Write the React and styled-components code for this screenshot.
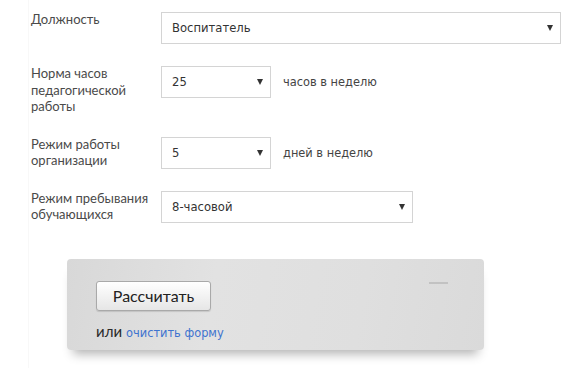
import React from "react";
import styled, {createGlobalStyle} from "styled-components";

const GlobalStyle = createGlobalStyle`
  html, body {
    margin: 0;
    padding: 0;
    background: #fff;
  }
`

const Page = styled.div`
  width: 569px;
  height: 368px;
  box-sizing: border-box;
  padding: 0 0 0 28px;
  overflow: hidden;
`

const Sheet = styled.div`
  height: 100%;
  border-left: 1px solid #f8f8f8;
  padding: 12px 0 0 2px;
  box-sizing: border-box;
`

const Form = styled.div`
  display: flex;
  flex-direction: column;
  gap: 22px;
`

const Row = styled.div`
  display: flex;
  align-items: flex-start;
`

const Label = styled.div`
  width: 130px;
  margin-top: -1px;
  font-family: Lato, "Open Sans", sans-serif;
  font-size: 13px;
  line-height: 16.5px;
  color: #4a4a4a;
`

const Field = styled.div`
  display: flex;
  align-items: center;
  height: 32px;
`

const SelectBox = styled.div`
  width: ${p => p.$width}px;
  height: 32px;
  box-sizing: border-box;
  border: 1px solid #d4d4d4;
  background: #fff;
  display: flex;
  align-items: center;
  justify-content: space-between;
  padding: 0 7px 0 10px;
  font-family: "DejaVu Sans", Verdana, sans-serif;
  font-size: 11.6px;
  color: #333;
`

const Arrow = styled.span`
  width: 0;
  height: 0;
  border-left: 3.5px solid transparent;
  border-right: 3.5px solid transparent;
  border-top: 6px solid #333;
`

const Suffix = styled.span`
  margin-left: 12px;
  font-family: "DejaVu Sans", Verdana, sans-serif;
  font-size: 11.4px;
  color: #444;
`

const Panel = styled.div`
  position: relative;
  margin: 36px 0 0 36px;
  width: 417px;
  height: 91px;
  box-sizing: border-box;
  padding: 22px 0 0 29px;
  border-radius: 4px;
  background: linear-gradient(100deg, #d8d8d8 0%, #e2e2e2 35%, #dfdfdf 70%, #dadada 100%);
  box-shadow: 0 10px 10px -6px rgba(0, 0, 0, 0.3);
`

const Dash = styled.span`
  position: absolute;
  top: 23px;
  right: 36px;
  width: 19px;
  height: 2px;
  background: #c2c2c2;
`

const Button = styled.button`
  display: block;
  width: 115px;
  height: 30px;
  padding: 0;
  border: 1px solid #a9a9a9;
  border-radius: 3px;
  background: linear-gradient(#ffffff, #e6e6e6);
  box-shadow: 0 1px 1px rgba(0, 0, 0, 0.12);
  font-family: Lato, "Open Sans", sans-serif;
  font-size: 16px;
  color: #222;
`

const Hint = styled.div`
  margin-top: 11px;
  font-family: Lato, "Open Sans", sans-serif;
  font-size: 15px;
  color: #2a2a2a;
`

const Link = styled.a`
  margin-left: 4px;
  font-family: "DejaVu Sans", Verdana, sans-serif;
  font-size: 11.4px;
  color: #3f74cf;
  text-decoration: none;
`

const rows = [
    {label: 'Должность', value: 'Воспитатель', width: 400},
    {label: 'Норма часов педагогической работы', value: '25', width: 110, suffix: 'часов в неделю'},
    {label: 'Режим работы организации', value: '5', width: 110, suffix: 'дней в неделю'},
    {label: 'Режим пребывания обучающихся', value: '8-часовой', width: 252},
]

export default function App() {
    return (
        <>
            <GlobalStyle/>
            <Page>
                <Sheet>
                    <Form>
                        {rows.map((row) => (
                            <Row key={row.label}>
                                <Label>{row.label}</Label>
                                <Field>
                                    <SelectBox $width={row.width}>
                                        <span>{row.value}</span>
                                        <Arrow/>
                                    </SelectBox>
                                    {row.suffix && <Suffix>{row.suffix}</Suffix>}
                                </Field>
                            </Row>
                        ))}
                    </Form>
                    <Panel>
                        <Dash/>
                        <Button>Рассчитать</Button>
                        <Hint>или<Link href="#">очистить форму</Link></Hint>
                    </Panel>
                </Sheet>
            </Page>
        </>
    )
}
